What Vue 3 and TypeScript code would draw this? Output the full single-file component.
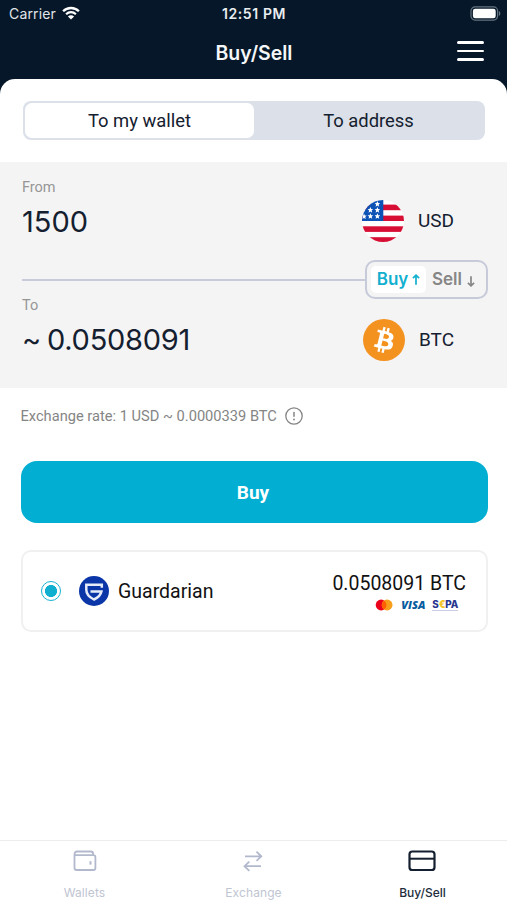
<script setup lang="ts">
import { ref } from 'vue'

type Side = 'buy' | 'sell'
type Target = 'wallet' | 'address'

const side = ref<Side>('buy')
const target = ref<Target>('wallet')
const stars: number[][] = [
  [15.4, 4], [8.4, 10], [15.4, 10], [8.4, 16.2], [15.4, 16.2], [2, 16.4],
]
</script>

<template>
  <div class="app">
    <header class="top">
      <div class="status">
        <div class="carrier">
          <span>Carrier</span>
          <svg class="wifi" viewBox="0 0 18 14" width="18" height="14">
            <path d="M1.1 5.3C5.5.9 12.5.9 16.9 5.3" fill="none" stroke="#fff" stroke-width="2.3" />
            <path d="M4.1 8.2c2.8-2.7 7-2.7 9.8 0" fill="none" stroke="#fff" stroke-width="2.2" />
            <path d="M9 13.5 5.9 10.4c1.7-1.6 4.5-1.6 6.2 0Z" fill="#fff" />
          </svg>
        </div>
        <div class="clock">12:51 PM</div>
        <svg class="battery" viewBox="0 0 31 15" width="31" height="15">
          <rect x="1" y=".9" width="26.6" height="13.2" rx="4" fill="none" stroke="#667380" stroke-width="1.2" />
          <rect x="2.9" y="2.7" width="22.8" height="9.6" rx="2.3" fill="#fff" />
          <path d="M28.9 5v5c1.9-.8 1.9-4.2 0-5Z" fill="#667380" />
        </svg>
      </div>
      <div class="title-row">
        <h1>Buy/Sell</h1>
        <button class="menu" aria-label="Menu"><i></i><i></i><i></i></button>
      </div>
    </header>

    <main class="sheet">
      <div class="segment">
        <button :class="{ on: target === 'wallet' }" @click="target = 'wallet'">To my wallet</button>
        <button :class="{ on: target === 'address' }" @click="target = 'address'">To address</button>
      </div>

      <section class="panel">
        <div class="row from">
          <div class="field">
            <label>From</label>
            <div class="amount">1500</div>
          </div>
          <div class="currency">
            <svg class="flag" viewBox="0 0 42 42" width="42" height="42">
              <defs><clipPath id="disc"><circle cx="21" cy="21" r="21" /></clipPath></defs>
              <g clip-path="url(#disc)">
                <rect width="42" height="42" fill="#fff" />
                <g fill="#d80f34">
                  <rect y="4.6" width="42" height="5.6" />
                  <rect y="15.6" width="42" height="5.4" />
                  <rect y="26.3" width="42" height="5.6" />
                  <rect y="37.2" width="42" height="5" />
                </g>
                <rect width="21.3" height="21" fill="#0d52b5" />
                <g fill="#fff">
                  <path v-for="(s, i) in stars" :key="i" :transform="`translate(${s[0]} ${s[1]}) scale(1.4)`" d="M0-2.1.6-.7 2-.6.9.4l.4 1.5L0 1.1l-1.3.8.4-1.5L-2-.6l1.4-.1Z" />
                </g>
              </g>
            </svg>
            <span>USD</span>
          </div>
        </div>

        <div class="divider">
          <div class="line"></div>
          <div class="toggle">
            <button :class="{ on: side === 'buy' }" @click="side = 'buy'">
              Buy
              <svg viewBox="0 0 8 11" width="8" height="11"><path d="M4 10.8V1.5M.9 4.2 4 1.2l3.1 3" /></svg>
            </button>
            <button :class="{ on: side === 'sell' }" @click="side = 'sell'">
              Sell
              <svg class="down" viewBox="0 0 8 11" width="8" height="11"><path d="M4 .2v9.3M.9 6.8 4 9.8l3.1-3" /></svg>
            </button>
          </div>
        </div>

        <div class="row to">
          <div class="field">
            <label>To</label>
            <div class="amount approx"><span class="tilde">~</span>0.0508091</div>
          </div>
          <div class="currency btc">
            <svg viewBox="0 0 32 32" width="42" height="42">
              <circle cx="16" cy="16" r="16" fill="#f49220" />
              <path fill="#fff" d="M23.19 14.02c.31-2.1-1.28-3.23-3.47-3.98l.71-2.84-1.73-.44-.7 2.77c-.45-.11-.92-.22-1.38-.32l.7-2.79-1.73-.43-.71 2.84c-.38-.09-.75-.17-1.1-.26v-.01l-2.39-.6-.46 1.85s1.28.3 1.26.31c.7.18.83.64.8 1.01l-.8 3.23c.05.01.11.03.18.06l-.18-.05-1.13 4.53c-.09.21-.3.53-.79.41.02.03-1.26-.31-1.26-.31l-.86 1.98 2.25.56c.42.11.83.22 1.23.32l-.71 2.87 1.72.43.71-2.84c.47.13.93.25 1.38.36l-.71 2.82 1.73.43.72-2.87c2.95.56 5.17.33 6.1-2.33.75-2.15-.04-3.39-1.59-4.19 1.13-.26 1.98-1 2.21-2.54Zm-3.95 5.54c-.54 2.15-4.15.99-5.32.7l.95-3.81c1.17.29 4.93.87 4.37 3.11Zm.53-5.57c-.49 1.95-3.49.96-4.47.72l.86-3.46c.98.24 4.12.7 3.61 2.74Z" />
            </svg>
            <span>BTC</span>
          </div>
        </div>
      </section>

      <div class="rate">
        <span>Exchange rate: 1 USD ~ 0.0000339 BTC</span>
        <svg viewBox="0 0 18 18" width="18" height="18">
          <circle cx="9" cy="9" r="8.2" fill="none" stroke="#858585" stroke-width="1.3" />
          <path d="M9 5.5v3.8" stroke="#858585" stroke-width="1.5" stroke-linecap="round" />
          <circle cx="9" cy="12.5" r=".9" fill="#858585" />
        </svg>
      </div>

      <button class="submit">Buy</button>

      <section class="provider">
        <span class="radio"></span>
        <svg class="logo" viewBox="0 0 30 30" width="30" height="30">
          <circle cx="15" cy="15" r="15" fill="#0b36a8" />
          <path d="M22.8 11.8V8.7H7.3v5c0 4.7 3.3 7.6 7.7 9.8 4-1.9 6.7-4.3 7.4-8H11.5" fill="none" stroke="#e6ebf8" stroke-width="2.5" />
        </svg>
        <span class="name">Guardarian</span>
        <div class="offer">
          <div class="sum">0.0508091 BTC</div>
          <div class="methods">
            <svg viewBox="0 0 18 12" width="18" height="12">
              <circle cx="6.1" cy="6" r="5.4" fill="#eb001b" />
              <circle cx="12.1" cy="6" r="5.4" fill="#f79e1b" />
              <path d="M9.1 1.5a5.4 5.4 0 0 1 0 9 5.4 5.4 0 0 1 0-9Z" fill="#ff5f00" />
            </svg>
            <span class="visa">VISA</span>
            <span class="sepa">S<b>€</b>PA</span>
          </div>
        </div>
      </section>
    </main>

    <nav class="tabs">
      <a class="tab">
        <svg viewBox="0 0 24 22" width="24" height="22" fill="none" stroke="#b3b9cd" stroke-width="1.8" stroke-linejoin="round">
          <path d="M1.5 5.2V18c0 1.3.8 2 2 2h17c1.1 0 1.9-.7 1.9-2V7.4c0-1.3-.8-2.2-2-2.2H1.5c0-2.5.9-3.7 2.5-3.7h13.800c1.4 0 2.3 1 2.3 2.4v1.3" />
          <path d="M17.5 11.2v3.400" stroke-width="2" />
        </svg>
        <span>Wallets</span>
      </a>
      <a class="tab">
        <svg class="nudge" viewBox="0 0 24 22" width="24" height="22" fill="none" stroke="#b3b9cd" stroke-width="1.8">
          <path d="M4 6.3h16M15.5 1.7l4.800 4.600-4.800 4.500M20 16.2H3.500M8.300 11.600l-4.800 4.600 4.800 4.600" />
        </svg>
        <span>Exchange</span>
      </a>
      <a class="tab active">
        <svg class="nudge" viewBox="0 0 28 22" width="28" height="22" fill="none" stroke="#14202f" stroke-width="2.2">
          <rect x="1.5" y="1.5" width="25" height="18.5" rx="2.8" />
          <path d="M1.5 8.7h25" stroke-width="2" />
        </svg>
        <span>Buy/Sell</span>
      </a>
    </nav>
  </div>
</template>

<style>
body {
  margin: 0;
  background: #fff;
}
</style>

<style scoped>
* {
  box-sizing: border-box;
}
button {
  border: 0;
  padding: 0;
  margin: 0;
  background: none;
  font: inherit;
  color: inherit;
}
svg {
  display: block;
  flex: none;
}
.app {
  width: 507px;
  height: 900px;
  display: flex;
  flex-direction: column;
  overflow: hidden;
  background: #fff;
  font-family: Roboto, sans-serif;
  color: #14202f;
}
.top {
  height: 99px;
  flex: none;
  background: #051728;
  color: #fff;
}
.status {
  height: 27px;
  display: grid;
  grid-template-columns: 1fr auto 1fr;
  align-items: center;
  padding: 0 6px 0 9px;
  font: 400 14px/28px Inter, sans-serif;
}
.carrier {
  display: flex;
  align-items: center;
  gap: 6px;
  letter-spacing: 0.15px;
  color: #e1e5e9;
}
.wifi {
  margin-top: -2px;
}
.clock {
  font-weight: 600;
  letter-spacing: 0.6px;
  margin-right: 2px;
  color: #e9edf0;
}
.battery {
  justify-self: end;
  margin-top: -2px;
}
.title-row {
  height: 50px;
  display: grid;
  grid-template-columns: 1fr auto 1fr;
  align-items: center;
  padding: 0 23px 0 24px;
}
h1 {
  grid-column: 2;
  margin: 1px 0 0;
  font: 600 19.5px/24px Inter, sans-serif;
  color: #f4f6f8;
}
.menu {
  justify-self: end;
  width: 27px;
  display: grid;
  gap: 6px;
  margin-top: -2px;
}
.menu i {
  height: 2.6px;
  border-radius: 2px;
  background: #fff;
}
.sheet {
  flex: 1;
  margin-top: -20px;
  padding-top: 22px;
  border-radius: 15px 15px 0 0;
  background: #fff;
}
.segment {
  height: 39px;
  margin: 0 22px 0 23px;
  padding: 2px;
  display: grid;
  grid-template-columns: 1fr 1fr;
  border-radius: 8px;
  background: #dce1e9;
  font-size: 18.4px;
}
.segment button {
  border-radius: 7px;
}
.segment .on {
  background: #fff;
}
.panel {
  height: 226px;
  margin-top: 22px;
  padding: 0 19px 0 22px;
  background: #f4f4f4;
}
.row {
  display: flex;
  justify-content: space-between;
}
.from {
  height: 98px;
  padding-top: 17px;
}
label {
  display: block;
  font-size: 14.5px;
  line-height: 18px;
  color: #969696;
}
.amount {
  margin-top: 7px;
  font: 400 29px/36px Inter, sans-serif;
}
.approx {
  letter-spacing: -0.25px;
}
.tilde {
  margin-right: 6px;
}
.currency {
  width: 126px;
  height: 42px;
  display: flex;
  align-items: center;
  gap: 14px;
  margin-top: 21px;
  font-size: 19px;
}
.currency span {
  margin-top: -2px;
}
.currency.btc {
  width: 125px;
  margin-top: 20px;
}
.divider {
  height: 39px;
  display: flex;
  align-items: center;
}
.line {
  flex: 1;
  height: 2px;
  background: #c8ccda;
  margin-top: 1px;
}
.toggle {
  width: 123px;
  height: 39px;
  padding: 4px;
  display: flex;
  border: 2px solid #c6cad9;
  border-radius: 10px;
  font: 600 17px/27px Inter, sans-serif;
  color: #868686;
}
.toggle button {
  display: flex;
  align-items: center;
  justify-content: center;
  gap: 5px;
  width: 55px;
  border-radius: 5px;
}
.toggle .on {
  gap: 4px;
  background: #fff;
  color: #12afd0;
}
.toggle path {
  fill: none;
  stroke: currentColor;
  stroke-width: 1.7;
}
.toggle .down {
  margin-top: 3px;
}
.to label {
  margin-top: -2px;
}
.rate {
  display: flex;
  align-items: center;
  gap: 8px;
  height: 18px;
  margin: 19px 20px 0 20.5px;
  font-size: 14.65px;
  color: #858585;
}
.submit {
  display: block;
  width: 467px;
  height: 62px;
  margin: 36px 0 0 20.5px;
  padding: 1px 2px 0 0;
  border-radius: 16px;
  background: #02afd3;
  color: #fff;
  font-size: 19px;
  font-weight: 700;
}
.provider {
  width: 467px;
  height: 82px;
  margin: 27px 0 0 20.5px;
  padding: 0 19.5px 0 18.5px;
  display: flex;
  align-items: center;
  border: 2px solid #f0f0f0;
  border-radius: 10px;
}
.radio {
  width: 20px;
  height: 20px;
  flex: none;
  border: 1.5px solid #16b2d2;
  border-radius: 50%;
  background: radial-gradient(circle, #10afd0 5.7px, transparent 6.3px);
}
.logo {
  margin-left: 18px;
}
.name {
  margin-left: 9px;
  padding-top: 1px;
  font-size: 19.5px;
  color: #111;
}
.offer {
  margin-left: auto;
  padding-top: 1px;
}
.sum {
  font-size: 19.5px;
  line-height: 24px;
  margin-top: 1px;
  color: #111;
}
.methods {
  height: 15px;
  margin-top: 1px;
  padding-right: 8px;
  display: flex;
  align-items: center;
  justify-content: flex-end;
  font-family: "Open Sans", sans-serif;
  font-size: 11px;
  line-height: 15px;
  font-weight: 800;
}
.visa {
  margin-left: 8px;
  font-style: italic;
  color: #075b9f;
}
.sepa {
  margin-left: 7px;
  font-family: Inter, sans-serif;
  font-size: 9.8px;
  line-height: 11px;
  letter-spacing: -0.2px;
  border-bottom: 1px solid #c9cce4;
  color: #28358f;
}
.sepa b {
  color: #f5c52b;
}
.tabs {
  height: 60px;
  flex: none;
  display: grid;
  grid-template-columns: repeat(3, 1fr);
  border-top: 1px solid #ececef;
  font: 400 12px/16px Inter, sans-serif;
  color: #c0c5d2;
}
.tab {
  display: flex;
  flex-direction: column;
  align-items: center;
  gap: 13px;
  padding-top: 9px;
  letter-spacing: 0.1px;
}
.nudge {
  margin-right: 2px;
}
.active {
  color: #222d3b;
  font-weight: 500;
  letter-spacing: 0;
}
</style>
